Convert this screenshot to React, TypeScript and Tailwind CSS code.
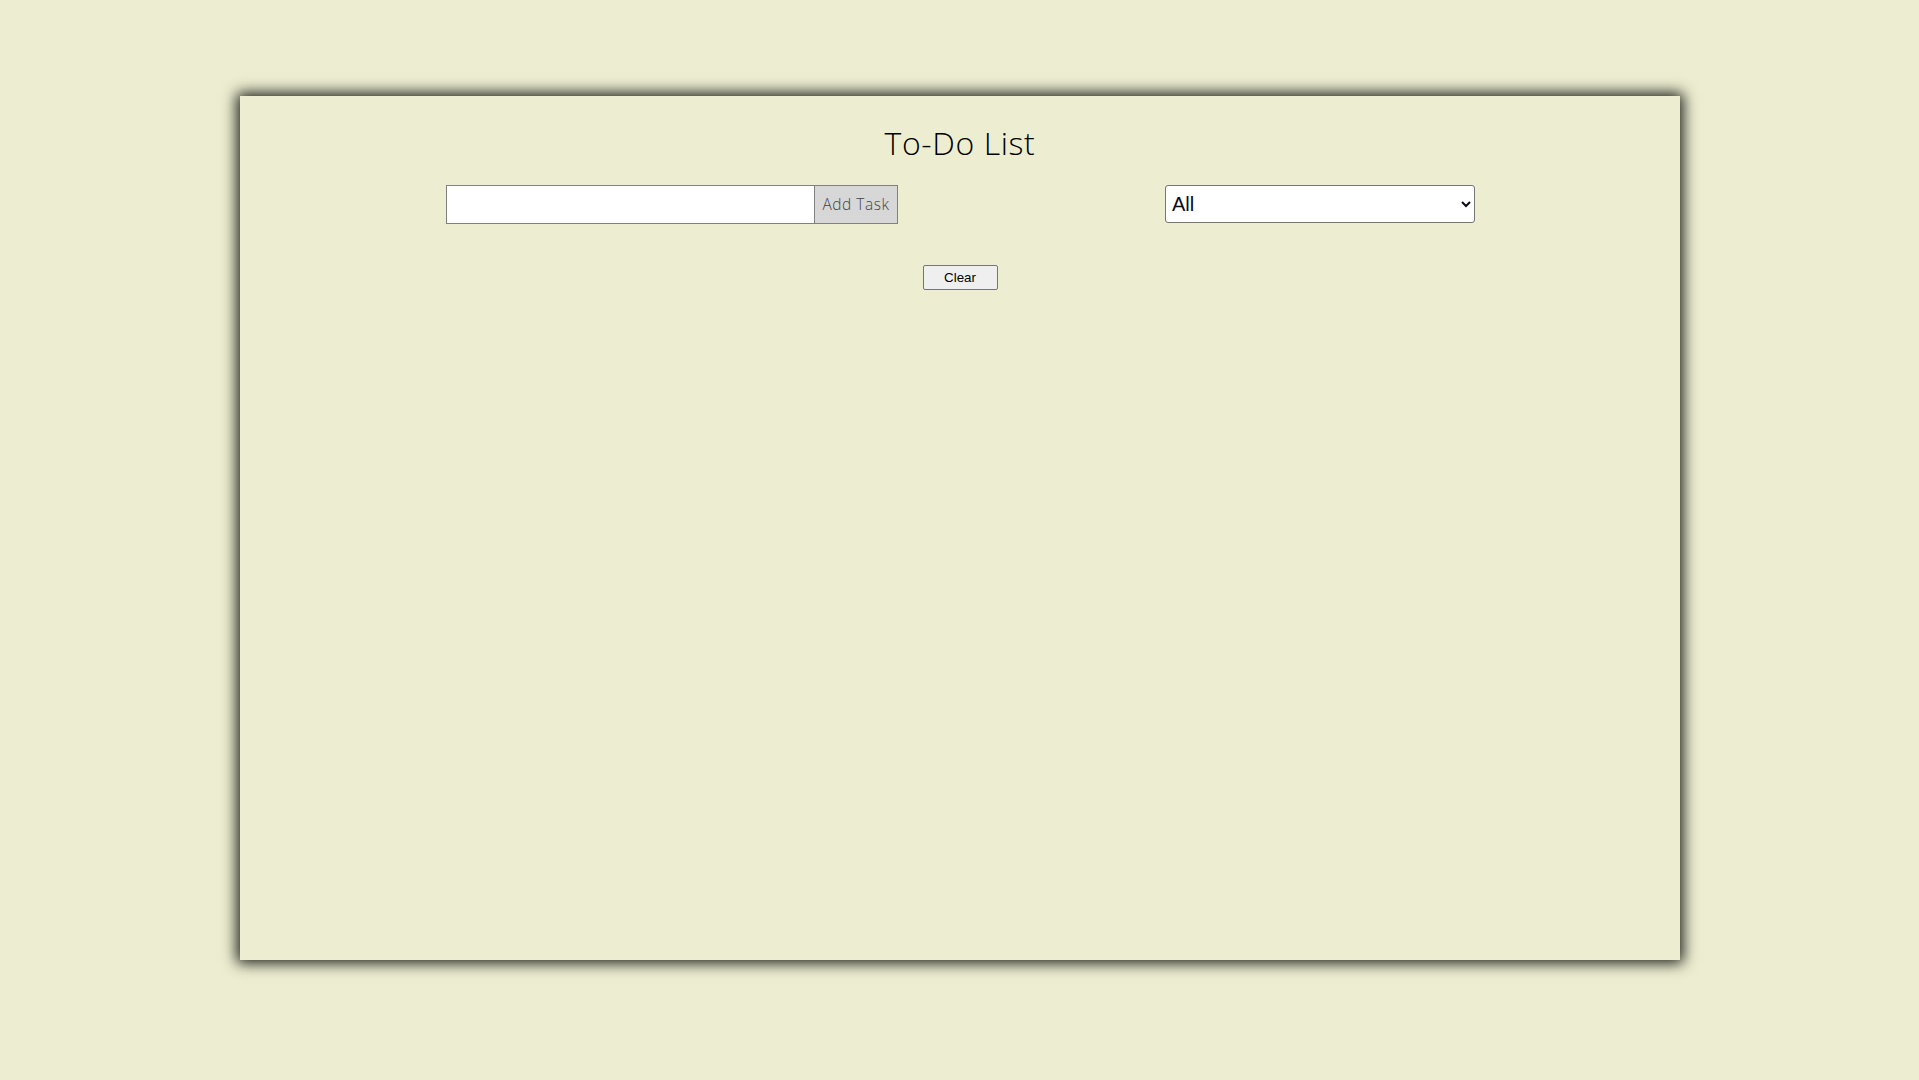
import { useState } from "react";

const App = () => {
    const [task, setTask] = useState("");
    const [filter, setFilter] = useState("All");
    return (
        <div className="min-h-screen w-full bg-[#edeed1] pt-[96px]">
            <div className="ml-[240px] w-[1440px] h-[864px] bg-[#edeed1] shadow-[0_0_14px_3px_rgba(0,0,0,0.9)] flex flex-col">
                <h1 className="text-center text-[32px] leading-[38px] mt-[28px] text-black font-['Open_Sans',sans-serif] font-light tracking-[0.6px]">
                    To-Do List
                </h1>
                <div className="flex justify-between items-start pl-[206px] pr-[205px] mt-[23px]">
                    <div className="flex">
                        <input
                            type="text"
                            value={task}
                            onChange={(e) => setTask(e.target.value)}
                            className="w-[368px] h-[39px] bg-white border border-[#808080] border-r-0 px-2 outline-none"
                        />
                        <button className="h-[39px] w-[84px] bg-[#d7d7d7] border border-[#808080] text-[15.5px] text-[#444] font-['Open_Sans',sans-serif] font-light tracking-[0.5px]">
                            Add Task
                        </button>
                    </div>
                    <select
                        value={filter}
                        onChange={(e) => setFilter(e.target.value)}
                        className="w-[310px] h-[38px] bg-white border border-[#767676] rounded-[3px] text-[20px] text-[#0a0a1a] pl-[2px] font-['Liberation_Sans',Arial,sans-serif]"
                    >
                        <option>All</option>
                        <option>Completed</option>
                        <option>Pending</option>
                    </select>
                </div>
                <div className="flex justify-center mt-[41px]">
                    <button className="w-[75px] h-[25px] bg-[#efefef] border border-[#767676] rounded-[2px] text-[13.33px] text-black font-['Liberation_Sans',Arial,sans-serif]">
                        Clear
                    </button>
                </div>
            </div>
        </div>
    )
}
export default App;
